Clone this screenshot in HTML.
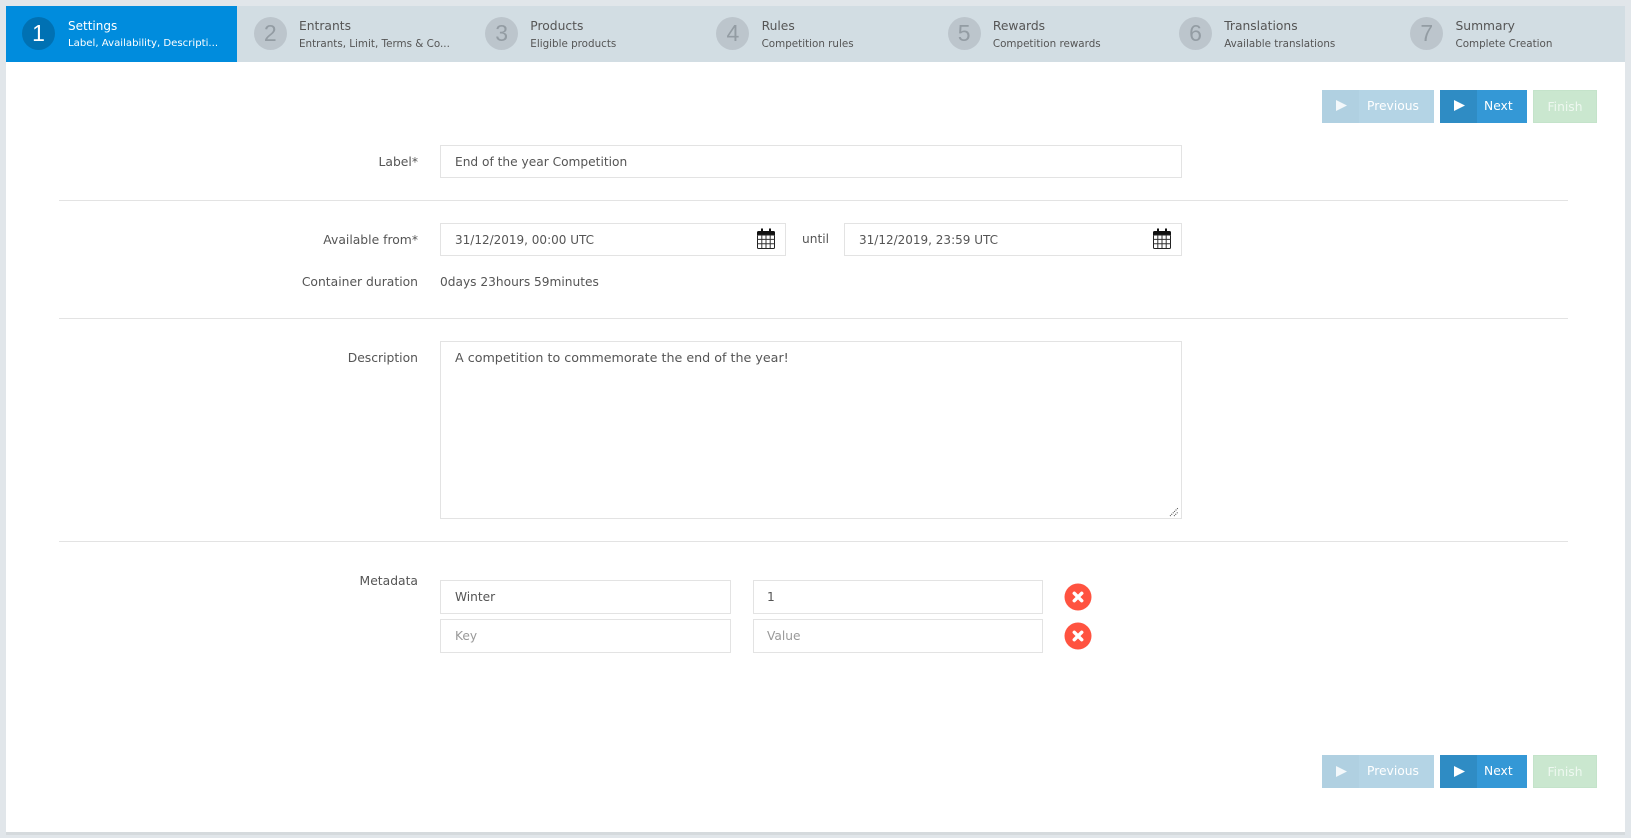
<!DOCTYPE html>
<html>
<head>
<meta charset="utf-8">
<style>
html,body{margin:0;padding:0;width:1631px;height:838px;overflow:hidden;background:#e1e6ea;}
body{font-family:"DejaVu Sans","Liberation Sans",sans-serif;font-size:12.2px;color:#555;position:relative;}
.a{position:absolute;white-space:nowrap;}
#panel{position:absolute;left:6px;top:6px;width:1619px;height:826px;background:#fff;box-shadow:0 3px 0 #d5dadd;}
#bar{position:absolute;left:6px;top:6px;width:1619px;height:56px;background:#d2dde3;}
.step{position:absolute;top:6px;height:56px;width:231.3px;}
.step.on{background:#008cdd;color:#fff;}
.c{position:absolute;left:16.5px;top:11px;width:33px;height:33px;border-radius:50%;background:#bcc5cc;color:#939ca3;font:23px/33px "Liberation Sans",sans-serif;text-align:center;}
.on .c{left:16px;background:#0071b3;color:#fff;}
.t{position:absolute;left:61.7px;top:12px;font-size:12.3px;line-height:16px;white-space:nowrap;color:#555;}
.s{position:absolute;left:61.7px;top:30px;font-size:10.35px;line-height:16px;white-space:nowrap;color:#555;}
.on .t{left:62px;color:#fff;font-size:12px;}
.on .s{left:62px;color:#fff;font-size:10.15px;}
.inp{position:absolute;box-sizing:border-box;border:1px solid #e3e3e3;background:#fff;padding-left:14px;font-size:12.2px;color:#555;white-space:nowrap;}
.lbl{position:absolute;right:1213px;white-space:nowrap;font-size:12.35px;line-height:16px;}
.hr{position:absolute;left:59px;width:1509px;height:1px;background:#e3e3e3;}
.btn{position:absolute;height:33px;box-sizing:border-box;color:#fff;font-size:12.3px;line-height:31px;}
.btn .ic{position:absolute;left:0;top:0;bottom:0;width:37px;}
.btn svg{position:absolute;left:14px;top:10px;}
.prev{left:1322px;width:112px;background:#b4d4e5;}
.prev .ic{background:#b0d0e1;}
.next{left:1440px;width:87px;background:#3498d6;}
.next .ic{background:#2f8cc4;}
.fin{left:1533px;width:64px;background:#cae7cf;border:1px solid #c4e3ca;text-align:center;line-height:33px;color:#eef8f0;}
.btn span{position:absolute;top:0.5px;}
.low span{top:1px;}
.low svg{top:11px;}
.cal{position:absolute;}
.x{position:absolute;left:1064px;width:28px;height:28px;}
</style>
</head>
<body>
<div id="panel"></div>
<div id="bar"></div>

<div class="step on" style="left:6px;width:231px;"><div class="c">1</div><div class="t">Settings</div><div class="s">Label, Availability, Descripti...</div></div>
<div class="step" style="left:237.3px;"><div class="c">2</div><div class="t">Entrants</div><div class="s">Entrants, Limit, Terms &amp; Co...</div></div>
<div class="step" style="left:468.6px;"><div class="c">3</div><div class="t">Products</div><div class="s">Eligible products</div></div>
<div class="step" style="left:699.9px;"><div class="c">4</div><div class="t">Rules</div><div class="s">Competition rules</div></div>
<div class="step" style="left:931.2px;"><div class="c">5</div><div class="t">Rewards</div><div class="s">Competition rewards</div></div>
<div class="step" style="left:1162.5px;"><div class="c">6</div><div class="t">Translations</div><div class="s">Available translations</div></div>
<div class="step" style="left:1393.8px;"><div class="c">7</div><div class="t">Summary</div><div class="s">Complete Creation</div></div>

<!-- top buttons -->
<div class="btn prev" style="top:90px;"><div class="ic"><svg width="11" height="11" viewBox="0 0 11 11"><path d="M0 0L11 5.500L0 11Z" fill="#fff" opacity=".85"/></svg></div><span style="left:45px;">Previous</span></div>
<div class="btn next" style="top:90px;"><div class="ic"><svg width="11" height="11" viewBox="0 0 11 11"><path d="M0 0L11 5.500L0 11Z" fill="#fff"/></svg></div><span style="left:44px;">Next</span></div>
<div class="btn fin" style="top:90px;">Finish</div>

<!-- label -->
<div class="lbl" style="top:154px;">Label*</div>
<div class="inp" style="left:440px;top:145px;width:742px;height:33px;line-height:32px;">End of the year Competition</div>
<div class="hr" style="top:200px;"></div>

<!-- dates -->
<div class="lbl" style="top:232px;">Available from*</div>
<div class="inp" style="left:440px;top:223px;width:346px;height:33px;line-height:33px;font-size:12px;">31/12/2019, 00:00 UTC</div>
<svg class="cal" style="left:756px;top:227px;" width="20" height="23" viewBox="0 0 20 23"><path d="M1 5.500Q1 4 2.500 4H17.500Q19 4 19 5.500V8H1z" fill="#111"/><rect x="5" y="1.500" width="2" height="4" fill="#111"/><rect x="13" y="1.500" width="2" height="4" fill="#111"/><rect x="1.500" y="8" width="17" height="13.500" rx="1" fill="#fff" stroke="#222"/><path d="M5.800 8v13M10 8v13M14.200 8v13M1.500 12.400h17M1.500 16.800h17" stroke="#333" fill="none"/></svg>
<div class="a" style="left:802px;top:231px;line-height:16px;">until</div>
<div class="inp" style="left:844px;top:223px;width:338px;height:33px;line-height:33px;font-size:12px;">31/12/2019, 23:59 UTC</div>
<svg class="cal" style="left:1152px;top:227px;" width="20" height="23" viewBox="0 0 20 23"><path d="M1 5.500Q1 4 2.500 4H17.500Q19 4 19 5.500V8H1z" fill="#111"/><rect x="5" y="1.500" width="2" height="4" fill="#111"/><rect x="13" y="1.500" width="2" height="4" fill="#111"/><rect x="1.500" y="8" width="17" height="13.500" rx="1" fill="#fff" stroke="#222"/><path d="M5.800 8v13M10 8v13M14.200 8v13M1.500 12.400h17M1.500 16.800h17" stroke="#333" fill="none"/></svg>
<div class="lbl" style="top:274px;">Container duration</div>
<div class="a" style="left:440px;top:274px;line-height:16px;font-size:12.2px;">0days 23hours 59minutes</div>
<div class="hr" style="top:318px;"></div>

<!-- description -->
<div class="lbl" style="top:350px;">Description</div>
<div class="inp" style="left:440px;top:341px;width:742px;height:178px;line-height:16px;padding-top:8px;font-size:12.7px;">A competition to commemorate the end of the year!</div>
<svg class="a" style="left:1169px;top:507px;" width="10" height="10" viewBox="0 0 10 10"><path d="M1 9L9 1M5 9L9 5" stroke="#444" stroke-width="1" stroke-dasharray="1 1" fill="none"/></svg>
<div class="hr" style="top:541px;"></div>

<!-- metadata -->
<div class="lbl" style="top:573px;">Metadata</div>
<div class="inp" style="left:440px;top:580px;width:291px;height:34px;line-height:32px;">Winter</div>
<div class="inp" style="left:753px;top:580px;width:290px;height:34px;line-height:32px;padding-left:13px;">1</div>
<svg class="x" style="top:583px;" viewBox="0 0 28 28"><circle cx="14" cy="14" r="13.500" fill="#ff5340"/><path d="M10.300 10.300L17.700 17.700M17.700 10.300L10.300 17.700" stroke="#fff" stroke-width="3.500" stroke-linecap="round"/></svg>
<div class="inp" style="left:440px;top:619px;width:291px;height:34px;line-height:32px;color:#999;">Key</div>
<div class="inp" style="left:753px;top:619px;width:290px;height:34px;line-height:32px;padding-left:13px;color:#999;">Value</div>
<svg class="x" style="top:622px;" viewBox="0 0 28 28"><circle cx="14" cy="14" r="13.500" fill="#ff5340"/><path d="M10.300 10.300L17.700 17.700M17.700 10.300L10.300 17.700" stroke="#fff" stroke-width="3.500" stroke-linecap="round"/></svg>

<!-- bottom buttons -->
<div class="btn prev low" style="top:755px;"><div class="ic"><svg width="11" height="11" viewBox="0 0 11 11"><path d="M0 0L11 5.500L0 11Z" fill="#fff" opacity=".85"/></svg></div><span style="left:45px;">Previous</span></div>
<div class="btn next low" style="top:755px;"><div class="ic"><svg width="11" height="11" viewBox="0 0 11 11"><path d="M0 0L11 5.500L0 11Z" fill="#fff"/></svg></div><span style="left:44px;">Next</span></div>
<div class="btn fin low" style="top:755px;">Finish</div>
</body>
</html>
